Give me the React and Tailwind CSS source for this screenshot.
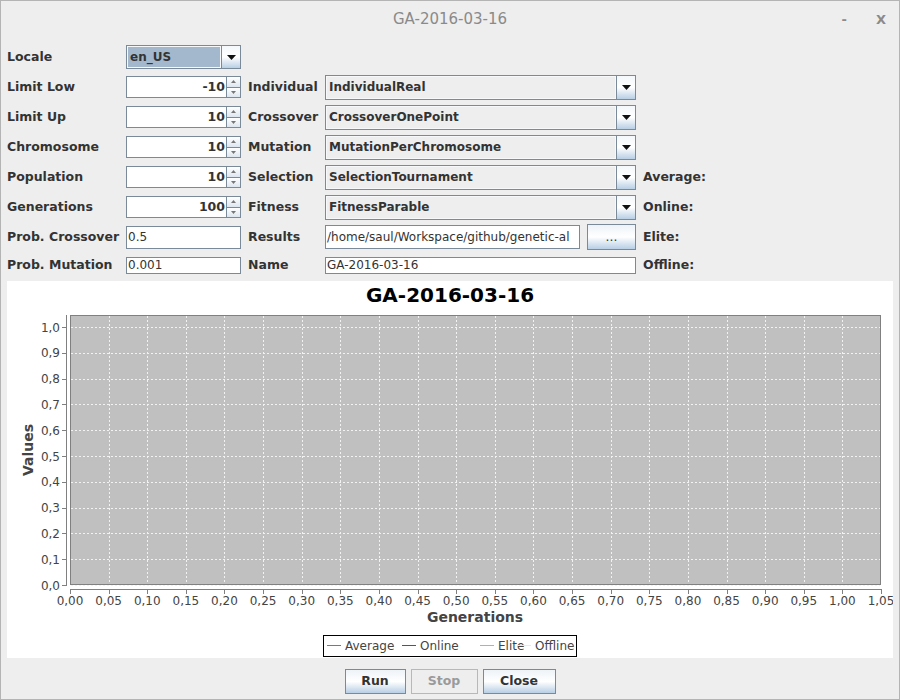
import React from "react"

const font = { fontFamily: '"DejaVu Sans", Verdana, sans-serif' }

const Label = ({ children, className = "" }) => (
  <div className={`text-[12.5px] font-bold text-[#333] whitespace-nowrap ${className}`}>{children}</div>
)

const ArrowDown = ({ w = 9, h = 5 }) => (
  <svg width={w} height={h} viewBox={`0 0 ${w} ${h}`}>
    <polygon points={`0,0 ${w},0 ${w / 2},${h}`} fill="#111" />
  </svg>
)

const Combo = ({ value, focused, className = "" }) => (
  <div className={`flex h-[24px] border border-[#7a8a99] ${className}`}>
    <div
      className={`flex-1 flex items-center pl-[2px] text-[12px] font-bold text-[#333] overflow-hidden whitespace-nowrap border border-[#f6f8fa] ${
        focused ? "bg-[#a3b8cc]" : "bg-[#eeeeee]"
      }`}
    >
      {value}
    </div>
    <div className="w-[19px] flex items-center justify-center border-l border-[#7a8a99] bg-linear-to-b from-[#f4f8fb] via-white to-[#b8cfe5]">
      <ArrowDown />
    </div>
  </div>
)

const Spinner = ({ value }) => (
  <div className="flex w-[115px] h-[22px]">
    <div className="flex-1 flex items-center justify-end pr-[1px] bg-white border border-[#7a8a99] text-[12.5px] font-bold text-[#333]">
      {value}
    </div>
    <div className="w-[14px] flex flex-col border border-l-0 border-[#7a8a99]">
      <div className="flex-1 flex items-center justify-center border-b border-[#7a8a99] bg-linear-to-b from-white to-[#dde6ef]">
        <svg width="5" height="3" viewBox="0 0 5 3">
          <polygon points="0,3 5,3 2.5,0" fill="#777" />
        </svg>
      </div>
      <div className="flex-1 flex items-center justify-center bg-linear-to-b from-white to-[#dde6ef]">
        <svg width="5" height="3" viewBox="0 0 5 3">
          <polygon points="0,0 5,0 2.5,3" fill="#777" />
        </svg>
      </div>
    </div>
  </div>
)

const Field = ({ value, className = "" }) => (
  <div
    className={`flex items-center pl-[1px] bg-white border border-[#7a8a99] text-[12px] text-[#333] overflow-hidden whitespace-nowrap ${className}`}
  >
    {value}
  </div>
)

const Button = ({ children, disabled, className = "" }) => (
  <div
    className={`h-[25px] flex items-center justify-center text-[12.5px] font-bold border ${
      disabled
        ? "border-[#b8b8b8] bg-[#eeeeee] text-[#9a9a9a]"
        : "border-[#7a8a99] bg-linear-to-b from-[#eef3f8] via-white to-[#b8cfe5] text-[#333]"
    } ${className}`}
  >
    {children}
  </div>
)

const Chart = () => {
  const yTicks = Array.from({ length: 11 }, (_, i) => i)
  const xTicks = Array.from({ length: 22 }, (_, i) => i)
  const yOf = (i) => 585 - i * 25.8
  const xOf = (i) => 70 + i * 38.62
  const legend = [
    { x: 327, label: "Average", color: "#ff4040" },
    { x: 402, label: "Online", color: "#4040ff" },
    { x: 480, label: "Elite", color: "#40ff40" },
    { x: 517, label: "Offline", color: "#ffff40" },
  ]
  return (
    <svg width="886" height="377" viewBox="7 281 886 377" style={font}>
      <rect x="7" y="281" width="886" height="377" fill="#ffffff" />
      <text x="450" y="302" textAnchor="middle" fontSize="20" fontWeight="bold" fill="#000">
        GA-2016-03-16
      </text>
      <rect x="70.5" y="315.5" width="810" height="269" fill="#c0c0c0" stroke="#808080" />
      {yTicks.map((i) => (
        <line
          key={`gy${i}`}
          x1="71"
          x2="880"
          y1={Math.round(yOf(i)) + 0.5}
          y2={Math.round(yOf(i)) + 0.5}
          stroke="#f2f2f2"
          strokeDasharray="2,2"
        />
      ))}
      {xTicks.slice(1, 21).map((i) => (
        <line
          key={`gx${i}`}
          y1="316"
          y2="584"
          x1={Math.round(xOf(i)) + 0.5}
          x2={Math.round(xOf(i)) + 0.5}
          stroke="#f2f2f2"
          strokeDasharray="2,2"
        />
      ))}
      <line x1="66.5" x2="66.5" y1="315" y2="586" stroke="#808080" />
      {yTicks.map((i) => (
        <g key={`ty${i}`}>
          <line x1="62" x2="66" y1={Math.round(yOf(i)) + 0.5} y2={Math.round(yOf(i)) + 0.5} stroke="#808080" />
          <text x="60" y={yOf(i) + 4.5} textAnchor="end" fontSize="12" fill="#444">
            {(i / 10).toFixed(1).replace(".", ",")}
          </text>
        </g>
      ))}
      <line x1="70" x2="882" y1="589.5" y2="589.5" stroke="#808080" />
      {xTicks.map((i) => (
        <g key={`tx${i}`}>
          <line y1="590" y2="594" x1={Math.round(xOf(i)) + 0.5} x2={Math.round(xOf(i)) + 0.5} stroke="#808080" />
          <text x={xOf(i)} y="605" textAnchor="middle" fontSize="12" fill="#444">
            {(i * 0.05).toFixed(2).replace(".", ",")}
          </text>
        </g>
      ))}
      <text x="475" y="622" textAnchor="middle" fontSize="14" fontWeight="600" fill="#444">
        Generations
      </text>
      <text
        x="0"
        y="0"
        transform="translate(33 450) rotate(-90)"
        textAnchor="middle"
        fontSize="14"
        fontWeight="600"
        fill="#444"
      >
        Values
      </text>
      <rect x="323.5" y="635.5" width="253" height="21" fill="#fff" stroke="#000" />
      {legend.map((l) => (
        <g key={l.label}>
          <rect x={l.x} y="645" width="14" height="1" fill={l.color} shapeRendering="crispEdges" />
          <text x={l.x + 18} y="650" fontSize="12" fill="#444">
            {l.label}
          </text>
        </g>
      ))}
    </svg>
  )
}

export default function App() {
  const mid = [
    { left: "Limit Low", spin: "-10", right: "Individual", combo: "IndividualReal", extra: "" },
    { left: "Limit Up", spin: "10", right: "Crossover", combo: "CrossoverOnePoint", extra: "" },
    { left: "Chromosome", spin: "10", right: "Mutation", combo: "MutationPerChromosome", extra: "" },
    { left: "Population", spin: "10", right: "Selection", combo: "SelectionTournament", extra: "Average:" },
    { left: "Generations", spin: "100", right: "Fitness", combo: "FitnessParable", extra: "Online:" },
  ]

  return (
    <div
      className="w-[900px] h-[700px] bg-[#eeeeee] flex flex-col shadow-[inset_0_0_0_1px_#b4b4b4]"
      style={font}
    >
      <div className="h-[42px] relative flex items-center justify-center">
        <div className="text-[15px] text-[#8a8a8a] -mt-[3px]">GA-2016-03-16</div>
        <div className="absolute right-[14px] top-[10px] flex gap-[29px] text-[13px] font-bold text-[#8a8a8a]">
          <span>-</span>
          <span>X</span>
        </div>
      </div>

      <div className="flex flex-col pl-[7px]">
        <div className="h-[30px] flex items-center">
          <Label className="w-[119px]">Locale</Label>
          <Combo value="en_US" focused className="w-[115px] h-[24px]" />
        </div>
        {mid.map((r) => (
          <div key={r.left} className="h-[30px] flex items-center">
            <Label className="w-[119px]">{r.left}</Label>
            <Spinner value={r.spin} />
            <Label className="w-[77px] ml-[7px]">{r.right}</Label>
            <Combo value={r.combo} className="w-[311px] h-[25px]" />
            <Label className="ml-[7px]">{r.extra}</Label>
          </div>
        ))}
        <div className="h-[30px] flex items-center">
          <Label className="w-[119px]">Prob. Crossover</Label>
          <Field value="0.5" className="w-[115px] h-[23px]" />
          <Label className="w-[77px] ml-[7px]">Results</Label>
          <Field value="/home/saul/Workspace/github/genetic-al" className="w-[255px] h-[24px]" />
          <Button className="w-[49px] ml-[7px] h-[26px] font-normal">...</Button>
          <Label className="ml-[7px]">Elite:</Label>
        </div>
        <div className="h-[26px] flex items-center">
          <Label className="w-[119px]">Prob. Mutation</Label>
          <Field value="0.001" className="w-[115px] h-[17px]" />
          <Label className="w-[77px] ml-[7px]">Name</Label>
          <Field value="GA-2016-03-16" className="w-[311px] h-[17px]" />
          <Label className="ml-[7px]">Offline:</Label>
        </div>
      </div>

      <div className="mt-[3px] ml-[7px] w-[886px] h-[377px]">
        <Chart />
      </div>

      <div className="flex justify-center gap-[5px] pt-[11px]">
        <Button className="w-[61px]">Run</Button>
        <Button disabled className="w-[67px]">Stop</Button>
        <Button className="w-[73px]">Close</Button>
      </div>
    </div>
  )
}
